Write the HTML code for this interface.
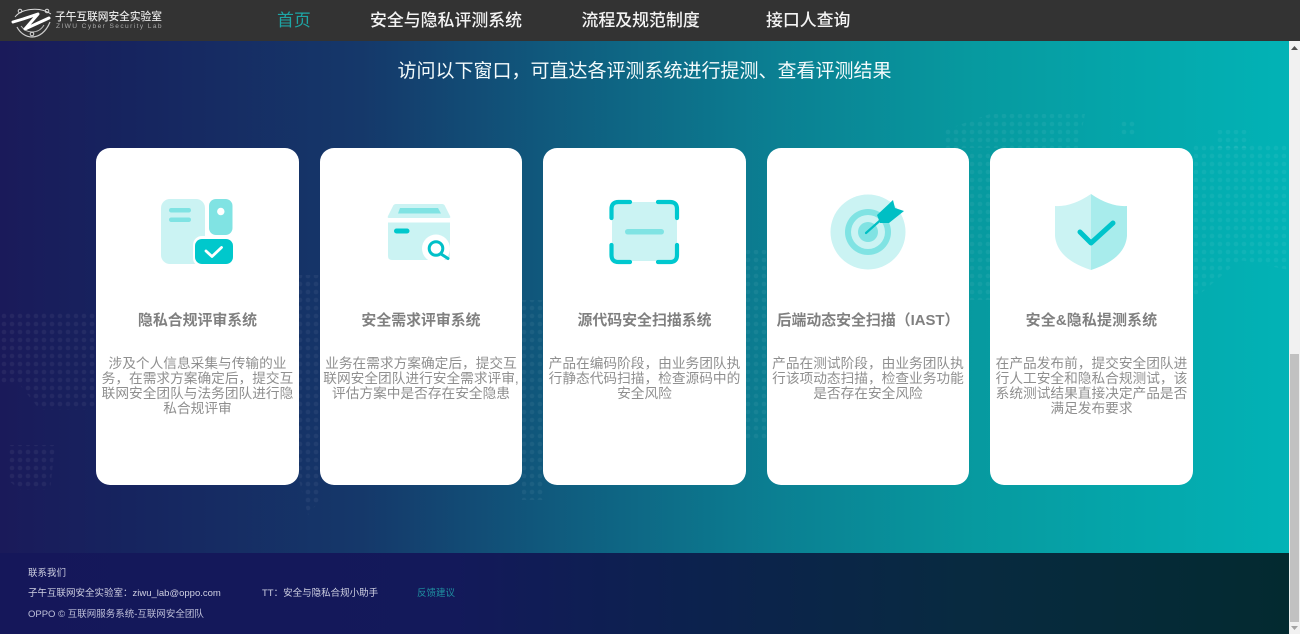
<!DOCTYPE html>
<html lang="zh"><head><meta charset="utf-8"><title>子午互联网安全实验室</title>
<style>
*{box-sizing:border-box;margin:0;padding:0}
html,body{width:1300px;height:634px;overflow:hidden;background:#f1f1f1;font-family:"Liberation Sans","Noto Sans CJK SC",sans-serif}
.abs{position:absolute}
#bg{left:0;top:41px;width:1289px;height:512px;background:linear-gradient(90deg,#1a1a5a 0%,#16245f 10%,#15386a 28%,#0f5f80 45%,#0b7f92 60%,#07999f 75%,#02b3b6 100%)}
#nav{left:0;top:0;width:1300px;height:41px;background:#333}
#nav a{position:absolute;top:8px;font-size:16.9px;line-height:25px;color:#f4f4f4;font-weight:500;white-space:nowrap;text-decoration:none}
#lg1{left:55px;top:11px;font-size:10.7px;line-height:13px;color:#e6e6e6;font-weight:500;white-space:nowrap}
#lg2{left:56px;top:22px;font-size:6.6px;line-height:9px;color:#a8a8a8;letter-spacing:1.4px;white-space:nowrap}
#title{left:0;top:58px;width:1289px;text-align:center;font-size:19px;line-height:28px;color:#f4fbfc;font-weight:400}
.card{position:absolute;top:148px;height:337px;background:#fff;border-radius:14px;text-align:center}
.card h3{position:absolute;left:0;right:0;top:163px;font-size:14.9px;line-height:21px;font-weight:700;color:#808080;white-space:nowrap}
.card p{position:absolute;left:0;right:0;top:208px;font-size:13.7px;line-height:15px;font-weight:400;color:#8f8f8f;white-space:nowrap}
#foot{left:0;top:553px;width:1289px;height:81px;background:linear-gradient(90deg,#15175a 0%,#13195a 35%,#0d2050 50%,#082a40 75%,#032a30 100%)}
.ft{position:absolute;font-size:9.5px;line-height:14px;color:#cfd0e2;white-space:nowrap}
#track{left:1289px;top:41px;width:11px;height:593px;background:#f1f1f1}
#thumb{left:1290px;top:354px;width:9px;height:268px;background:#c1c1c1}
</style></head><body>
<div id="bg" class="abs"></div>
<svg class="abs" style="left:0;top:0" width="1289" height="553" viewBox="0 0 1289 553">
<defs><pattern id="d" width="8" height="8" patternUnits="userSpaceOnUse"><circle cx="4" cy="4" r="2.3" fill="#fff" fill-opacity=".05"/></pattern></defs>
<g fill="url(#d)">
<path d="M0 312H96V410H40L20 385H0Z"/>
<path d="M8 445H55L50 490H20L8 480Z"/>
<path d="M299 275H320V500L308 515L299 480Z"/>
<path d="M522 300H543V500H522Z"/>
<path d="M746 250H767V440H746Z"/>
<path d="M970 150H990V300H970Z"/>
<path d="M1193 145H1289V270L1240 260L1193 300Z"/>
<path d="M945 130L990 114H1085L1078 148H945Z"/>
<path d="M1120 120H1135V135H1120Z"/>
<path d="M1215 130H1250V148H1215Z"/>
</g></svg>

<div id="nav" class="abs">
<svg class="abs" style="left:11px;top:5px" width="44" height="33" viewBox="0 0 44 33" fill="none">
<path d="M4 12C10 4 28 1 40 9" stroke="#ddd" stroke-width="1"/>
<path d="M6 22C9 28 15 32 21 32C28 32 35 27 39 17" stroke="#ccc" stroke-width="1.2"/>
<path d="M10 21C13 25 17 27 21 27C26 27 30 25 33 20" stroke="#bbb" stroke-width="1"/>
<path d="M2 17L12 14L27 9L14 24L38 13" stroke="#fff" stroke-width="3" stroke-linejoin="round" stroke-linecap="round"/>
<circle cx="9" cy="6" r="1.8" stroke="#ddd"/><circle cx="36" cy="6" r="1.8" stroke="#ddd"/><circle cx="21" cy="29" r="1.8" stroke="#ddd" fill="#333"/>
</svg>
<div id="lg1" class="abs">子午互联网安全实验室</div>
<div id="lg2" class="abs">ZIWU Cyber Security Lab</div>
<a style="left:277px;color:#1ea5a5;font-weight:400">首页</a>
<a style="left:370px">安全与隐私评测系统</a>
<a style="left:581.500px">流程及规范制度</a>
<a style="left:766px">接口人查询</a>
</div>

<div id="title" class="abs">访问以下窗口，可直达各评测系统进行提测、查看评测结果</div>

<div class="card" style="left:96px;width:203px"><h3>隐私合规评审系统</h3><p>涉及个人信息采集与传输的业<br>务，在需求方案确定后，提交互<br>联网安全团队与法务团队进行隐<br>私合规评审</p></div>
<div class="card" style="left:320px;width:202px"><h3>安全需求评审系统</h3><p>业务在需求方案确定后，提交互<br>联网安全团队进行安全需求评审,<br>评估方案中是否存在安全隐患</p></div>
<div class="card" style="left:543px;width:203px"><h3>源代码安全扫描系统</h3><p>产品在编码阶段，由业务团队执<br>行静态代码扫描，检查源码中的<br>安全风险</p></div>
<div class="card" style="left:767px;width:202px"><h3>后端动态安全扫描（IAST）</h3><p>产品在测试阶段，由业务团队执<br>行该项动态扫描，检查业务功能<br>是否存在安全风险</p></div>
<div class="card" style="left:990px;width:203px"><h3 style="letter-spacing:.2px">安全&amp;隐私提测系统</h3><p>在产品发布前，提交安全团队进<br>行人工安全和隐私合规测试，该<br>系统测试结果直接决定产品是否<br>满足发布要求</p></div>

<svg class="abs" style="left:0;top:0" width="1289" height="300" viewBox="0 0 1289 300" fill="none">
<!-- icon 1 -->
<rect x="161" y="199" width="44" height="65" rx="9" fill="#cbf3f3"/>
<rect x="169" y="208" width="22" height="4.5" rx="2.2" fill="#80e3e3"/>
<rect x="169" y="217.5" width="22" height="4.5" rx="2.2" fill="#80e3e3"/>
<rect x="209" y="199" width="23.500" height="36" rx="7" fill="#80e3e3"/>
<circle cx="220.800" cy="211.500" r="3.700" fill="#fff"/>
<rect x="193" y="236" width="42" height="31" rx="9" fill="#fff"/>
<rect x="195" y="239" width="38" height="25" rx="7" fill="#00c8cc"/>
<path d="M206 251L212 256.500L221.500 247.500" stroke="#fff" stroke-width="2.800" stroke-linecap="round" stroke-linejoin="round"/>
<!-- icon 2 -->
<path d="M396 204H442Q444 204 445 206L450 216Q451 218 449 218H389Q387 218 388 216L393 206Q394 204 396 204Z" fill="#cbf3f3"/>
<path d="M400 208H438L441 213.500H398Z" fill="#80e3e3"/>
<path d="M388 222.500H450V256Q450 260 446 260H392Q388 260 388 256Z" fill="#cbf3f3"/>
<rect x="394" y="228.500" width="15.500" height="5" rx="2.500" fill="#00c8cc"/>
<circle cx="436" cy="248.500" r="14" fill="#fff"/>
<circle cx="436" cy="248.500" r="6.800" stroke="#00c0c8" stroke-width="3"/>
<path d="M441 254L448 258.500" stroke="#00c0c8" stroke-width="3" stroke-linecap="round"/>
<!-- icon 3 -->
<rect x="612" y="202" width="65" height="59" rx="4" fill="#cbf3f3"/>
<rect x="625" y="229" width="39" height="5.500" rx="2.700" fill="#80e3e3"/>
<g stroke="#00c8cf" stroke-width="4.200" stroke-linecap="round">
<path d="M611.500 218V209Q611.500 202 618.500 202H630"/>
<path d="M658 202H670Q677 202 677 209V218"/>
<path d="M611.500 245V255Q611.500 262 618.500 262H630"/>
<path d="M658 262H670Q677 262 677 255V245"/>
</g>
<!-- icon 4 -->
<circle cx="868" cy="232" r="37.500" fill="#cbf3f3"/>
<circle cx="868" cy="232" r="23" fill="#80e3e3"/>
<circle cx="868" cy="232" r="17" fill="#cbf3f3"/>
<circle cx="868" cy="232" r="10" fill="#80e3e3"/>
<path d="M866 233L884 217" stroke="#00bfc4" stroke-width="2.200" stroke-linecap="round"/>
<path d="M877 215L893 200L895 208L904 211L889 223L880 223Z" fill="#00bfc4"/>
<!-- icon 5 -->
<path d="M1091 194Q1072 207 1055 206V236Q1057 259 1091 270Z" fill="#cbf3f3"/>
<path d="M1091 194Q1110 207 1127 206V236Q1125 259 1091 270Z" fill="#a8ecec"/>
<path d="M1080 232L1091 243L1113 223" stroke="#00c4cb" stroke-width="5" stroke-linecap="round" stroke-linejoin="round"/>
</svg>

<div id="foot" class="abs">
<div class="ft" style="left:28px;top:14px">联系我们</div>
<div class="ft" style="left:28px;top:34px">子午互联网安全实验室：ziwu_lab@oppo.com</div>
<div class="ft" style="left:262px;top:34px">TT：安全与隐私合规小助手</div>
<div class="ft" style="left:417px;top:34px;color:#1f8fa0">反馈建议</div>
<div class="ft" style="left:28px;top:55px;color:#bfc1da">OPPO © 互联网服务系统-互联网安全团队</div>
</div>

<div id="track" class="abs"></div>
<div id="thumb" class="abs"></div>
<svg class="abs" style="left:1289px;top:41px" width="11" height="593" viewBox="0 0 11 593">
<path d="M5.500 5L9 9H2Z" fill="#505050"/><path d="M2 585H9L5.500 589Z" fill="#a3a3a3"/>
</svg>
</body></html>
